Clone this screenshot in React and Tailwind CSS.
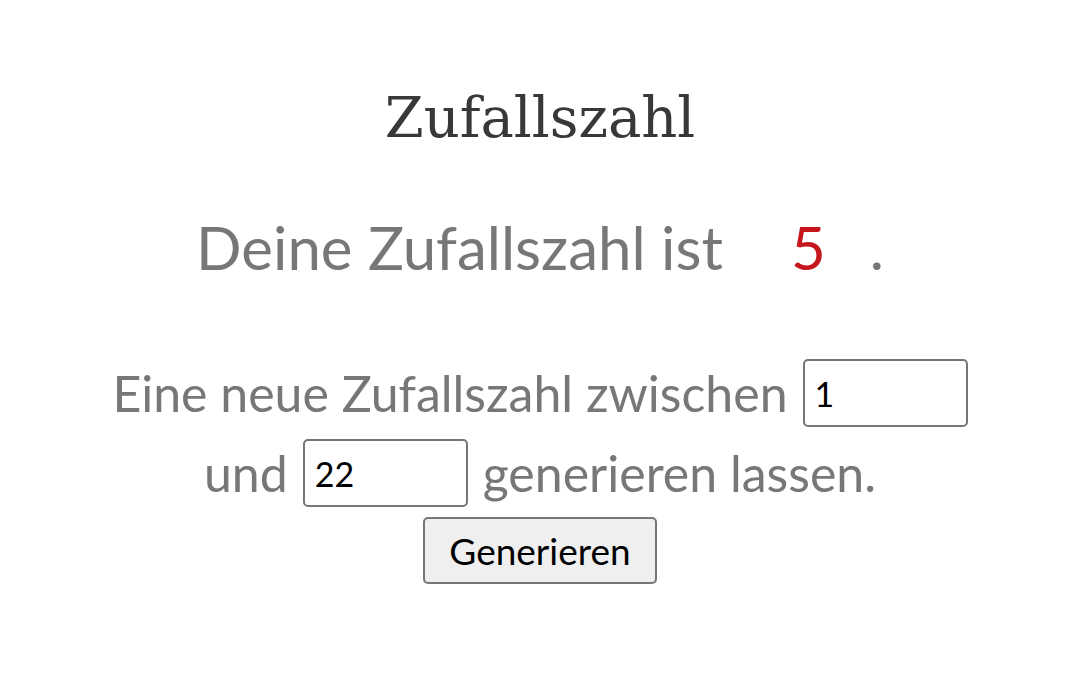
import React from "react";

export default function App() {
  return (
    <div className="min-h-screen bg-white flex flex-col items-center pt-[78px] font-['Lato','Noto_Sans',sans-serif]">
      {/* title */}
      <h1 className="font-['DejaVu_Serif',serif] text-[56px] leading-[80px] text-[#383838] font-light">
        Zufallszahl
      </h1>

      {/* result */}
      <p className="mt-[49px] text-[60px] leading-[80px] text-[#777777]">
        Deine Zufallszahl ist
        <span className="inline-block ml-[68px] mr-[44px] text-[#c4161c]">5</span>.
      </p>

      {/* form */}
      <div className="mt-[66px] flex flex-col items-center text-[50px] text-[#777777]">
        <div className="flex items-center gap-[15px] h-[80px]">
          <span>Eine neue Zufallszahl zwischen</span>
          <Field value="1" />
        </div>
        <div className="flex items-center gap-[15px] h-[80px]">
          <span>und</span>
          <Field value="22" />
          <span>generieren lassen.</span>
        </div>
        <button className="mt-[4px] w-[234px] h-[67px] bg-[#efefef] border-2 border-[#767676] rounded-[5px] text-[37px] leading-none text-black">
          Generieren
        </button>
      </div>
    </div>
  );
}

function Field({ value }) {
  return (
    <input
      type="text"
      defaultValue={value}
      className="w-[165px] h-[68px] border-2 border-[#767676] rounded-[5px] px-[10px] text-[34px] text-black bg-white outline-none"
    />
  );
}
